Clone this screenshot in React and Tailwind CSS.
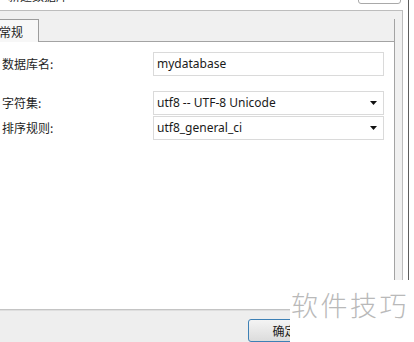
import React from 'react';

const Caret = () => (
  <svg width="7" height="4" viewBox="0 0 7 4" className="shrink-0">
    <path d="M0 0 H7 L3.5 4 Z" fill="#111" />
  </svg>
);

const Field = ({ label, value, select, className = '' }) => (
  <div className={`flex items-center h-[24px] ${className}`}>
    <div className="w-[151px] pt-[1px] text-[12px] text-[#1e1e1e] font-['Noto_Sans_CJK_SC',sans-serif]">{label}</div>
    <div className="w-[231px] h-[24px] flex items-center justify-between border border-[#dadada] bg-white pl-[3px] pr-[6px]">
      <span className="text-[12px] text-[#1a1a1a] font-['Noto_Sans',sans-serif]">{value}</span>
      {select && <Caret />}
    </div>
  </div>
);

const App = () => {
  return (
    <div className="w-[414px] h-[342px] overflow-hidden bg-white relative flex font-['Noto_Sans','Noto_Sans_CJK_SC',sans-serif]">
      <div className="w-[408px] flex flex-col shrink-0">
        {/* Title strip */}
        <div className="h-[10px] flex justify-between items-start overflow-hidden">
          <span className="-mt-[11px] ml-[8px] text-[12px] leading-[14px] text-[#222] font-['Noto_Sans_CJK_SC',sans-serif]">新建数据库</span>
          <div className="-mt-[10px] mr-[7px] w-[43px] h-[14px] border border-[#a9a9a9] rounded-[3px] bg-white" />
        </div>

        {/* Outer panel */}
        <div className="h-[303px] w-[403px] flex flex-col bg-[#f0f0f0] border-t border-r border-[#bdbdbd] pt-[8px] pr-[7px]">
          <div className="flex h-[23px]">
            <div className="w-[39px] h-[23px] bg-[#f7f7f7] border-t border-r border-[#9c9c9c] flex items-center text-[12px] text-[#1e1e1e] font-['Noto_Sans_CJK_SC',sans-serif]">
              <span className="-ml-[1px] pt-[2px]">常规</span>
            </div>
            <div className="flex-1 border-b border-r border-[#a3a3a3]" />
          </div>
          <div className="flex-1 bg-white border-r border-[#a3a3a3] pt-[10px] pl-[2px]">
            <Field label="数据库名:" value="mydatabase" />
            <Field label="字符集:" value="utf8 -- UTF-8 Unicode" select className="mt-[15px]" />
            <Field label="排序规则:" value="utf8_general_ci" select className="mt-[1px]" />
          </div>
        </div>

        {/* Separator */}
        <div className="h-px bg-[#c4c4c4]" />
        <div className="h-px bg-[#dedede]" />

        {/* Footer */}
        <div className="flex-1 bg-[#eeeeee] pt-[8px] pl-[248px]">
          <div className="w-[73px] h-[23px] rounded-[3px] border border-[#3d80b5] bg-gradient-to-b from-[#f4f4f4] to-[#dcdcdc] flex items-center justify-center text-[12px] text-[#1a1a1a] font-['Noto_Sans_CJK_SC',sans-serif]">
            确定
          </div>
        </div>
      </div>
      <div className="w-px bg-[#5c5c5c] shrink-0" />
      <div className="flex-1 bg-white" />

      {/* Watermark */}
      <div className="absolute right-0 bottom-0 w-[124px] h-[62px] bg-white pt-[11px] pl-[1px]">
        <span className="text-[27px] leading-none tracking-[2.5px] text-[#b9b9b9] font-light font-['Noto_Sans_CJK_SC',sans-serif]">软件技巧</span>
      </div>
    </div>
  );
};

export default App;
